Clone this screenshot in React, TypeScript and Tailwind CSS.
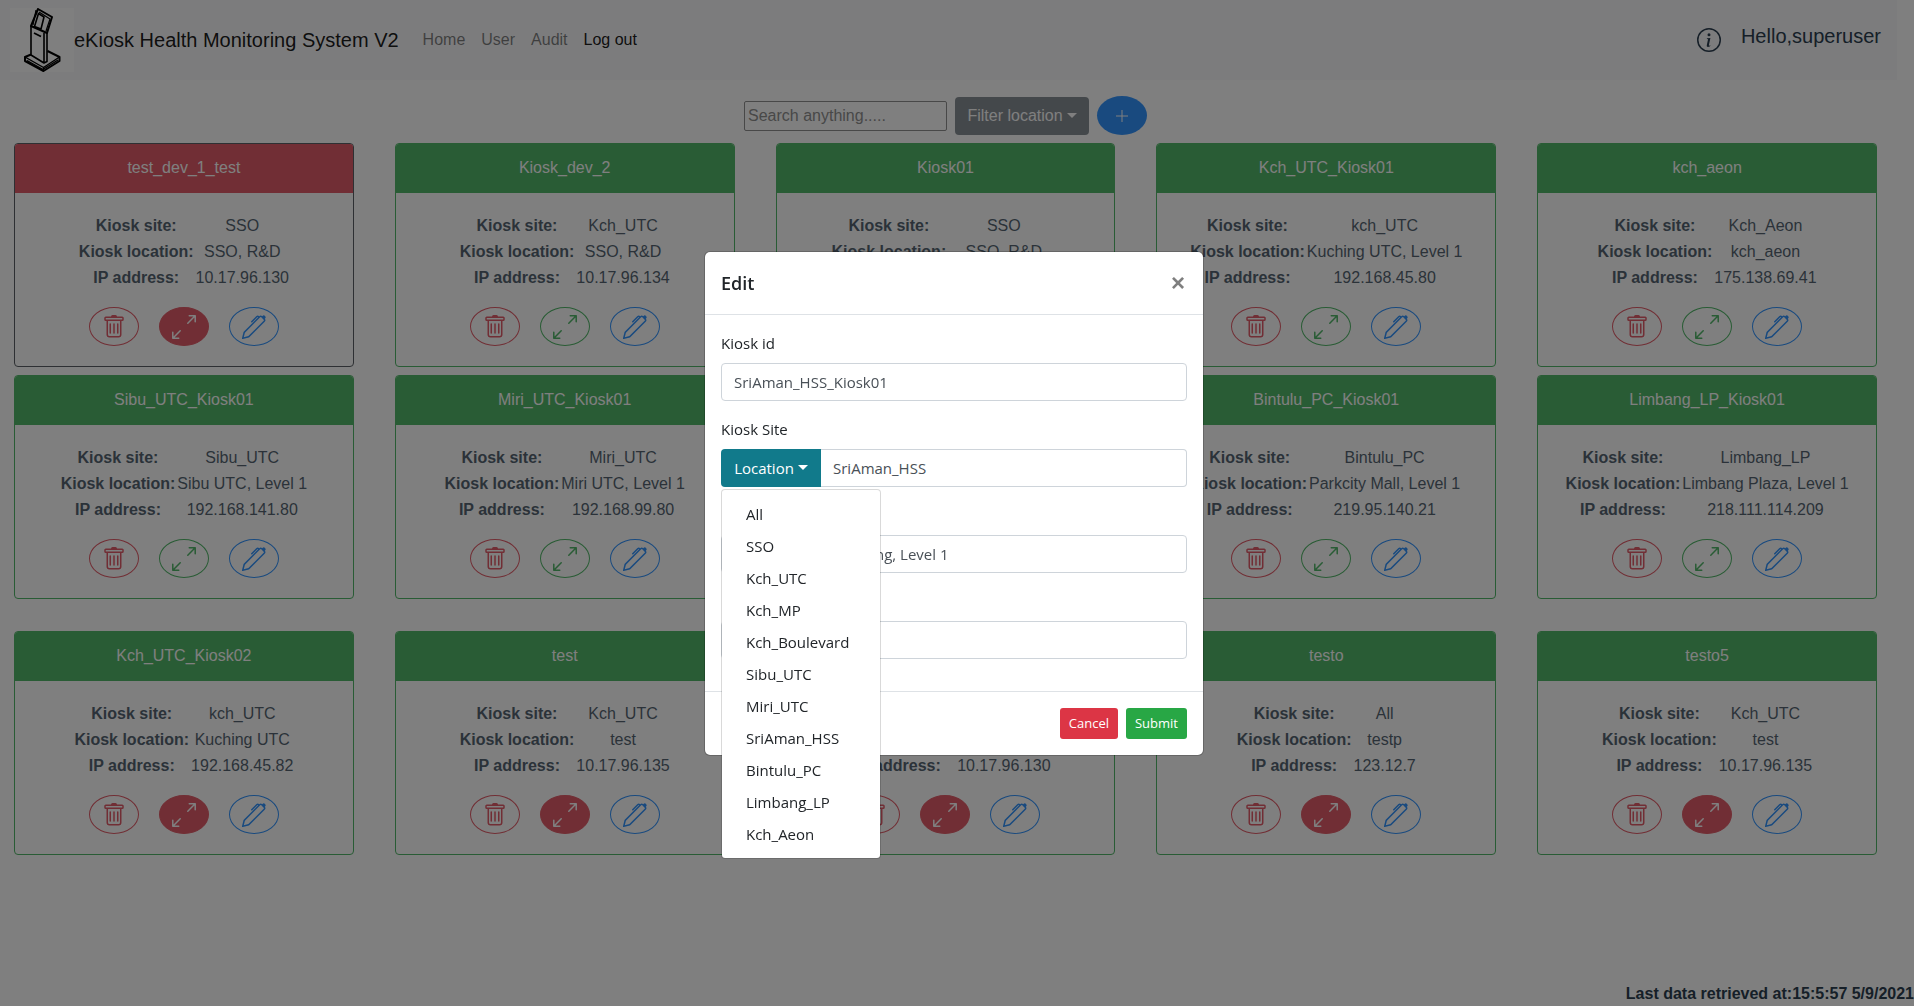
import { useState } from "react";
import { BsArrowsAngleExpand, BsInfoCircle, BsPen, BsTrash } from "react-icons/bs";

type Kiosk = {
  name: string;
  site: string;
  location: string;
  ip: string;
  alert?: boolean;
  closed?: boolean;
};

const mainKiosks: Kiosk[] = [
  { name: "test_dev_1_test", site: "SSO", location: "SSO, R&D", ip: "10.17.96.130", alert: true, closed: true },
  { name: "Kiosk_dev_2", site: "Kch_UTC", location: "SSO, R&D", ip: "10.17.96.134" },
  { name: "Kiosk01", site: "SSO", location: "SSO, R&D", ip: "192.168.101.80" },
  { name: "Kch_UTC_Kiosk01", site: "kch_UTC", location: "Kuching UTC, Level 1", ip: "192.168.45.80" },
  { name: "kch_aeon", site: "Kch_Aeon", location: "kch_aeon", ip: "175.138.69.41" },
  { name: "Sibu_UTC_Kiosk01", site: "Sibu_UTC", location: "Sibu UTC, Level 1", ip: "192.168.141.80" },
  { name: "Miri_UTC_Kiosk01", site: "Miri_UTC", location: "Miri UTC, Level 1", ip: "192.168.99.80" },
  { name: "SriAman_HSS_Kiosk01", site: "SriAman_HSS", location: "Level 1", ip: "" },
  { name: "Bintulu_PC_Kiosk01", site: "Bintulu_PC", location: "Parkcity Mall, Level 1", ip: "219.95.140.21" },
  { name: "Limbang_LP_Kiosk01", site: "Limbang_LP", location: "Limbang Plaza, Level 1", ip: "218.111.114.209" },
];

const otherKiosks: Kiosk[] = [
  { name: "Kch_UTC_Kiosk02", site: "kch_UTC", location: "Kuching UTC", ip: "192.168.45.82", closed: true },
  { name: "test", site: "Kch_UTC", location: "test", ip: "10.17.96.135", closed: true },
  { name: "test2", site: "SSO", location: "test", ip: "10.17.96.130", closed: true },
  { name: "testo", site: "All", location: "testp", ip: "123.12.7", closed: true },
  { name: "testo5", site: "Kch_UTC", location: "test", ip: "10.17.96.135", closed: true },
];

const locations = [
  "All",
  "SSO",
  "Kch_UTC",
  "Kch_MP",
  "Kch_Boulevard",
  "Sibu_UTC",
  "Miri_UTC",
  "SriAman_HSS",
  "Bintulu_PC",
  "Limbang_LP",
  "Kch_Aeon",
];

const round = "flex h-[39px] w-[50px] items-center justify-center rounded-[50%] border text-2xl";
const field =
  "h-[38px] w-full min-w-0 rounded border border-[#ced4da] bg-white px-3 text-[15px] text-[#495057] outline-none";

function Caret() {
  return (
    <span
      aria-hidden="true"
      className="inline-block border-x-[5px] border-t-[5px] border-x-transparent border-t-current"
    />
  );
}

function KioskLogo() {
  return (
    <svg viewBox="10 8 64 64" className="size-16 bg-white" fill="none" stroke="#000" strokeLinejoin="round" aria-hidden="true">
      <path strokeWidth="2" d="M38 9 52 17 47 33 31 26Z" />
      <path strokeWidth="1.2" d="M36 10 33 25M39 12 50 19M50 19 46 31" />
      <path strokeWidth="1.6" d="M38.500 13.500 44 17 41 29 34.500 26.500Z" />
      <path strokeWidth="1.6" d="M31 26V55L44 63V33M47 33V61.500L44 63" />
      <path strokeWidth="1.8" d="M34 33 41 36.500" />
      <path strokeWidth="2" d="M31 54.500 25 57V61L43.500 71 59.500 61V57L47.500 51" />
      <path strokeWidth="1.4" d="M25 57 43.500 67.500 59.500 57M43.500 67.500V71M27 60.500 43 69.500 58 60" />
    </svg>
  );
}

function KioskCard({ kiosk }: { kiosk: Kiosk }) {
  const rows = [
    ["Kiosk site:", kiosk.site],
    ["Kiosk location:", kiosk.location],
    ["IP address:", kiosk.ip],
  ];
  return (
    <article
      className={`overflow-hidden rounded border bg-white opacity-80 ${kiosk.alert ? "border-[#343a40]" : "border-[#28a745]"}`}
    >
      <h2
        className={`border-b py-3 text-center leading-6 text-white ${
          kiosk.alert ? "border-[#dc3545] bg-[#dc3545]" : "border-[#28a745] bg-[#28a745]"
        }`}
      >
        {kiosk.name}
      </h2>
      <div className="p-5">
        <table className="mx-auto text-center leading-6 whitespace-nowrap">
          <tbody>
            {rows.map(([label, value]) => (
              <tr key={label}>
                <th scope="row" className="p-px font-bold">
                  {label}
                </th>
                <td className="p-px">{value}</td>
              </tr>
            ))}
          </tbody>
        </table>
        <div className="mt-4 flex justify-center gap-5">
          <button type="button" aria-label="Delete" className={`${round} border-[#dc3545] text-[#dc3545]`}>
            <BsTrash />
          </button>
          <button
            type="button"
            aria-label="Expand"
            className={`${round} ${
              kiosk.closed ? "border-[#dc3545] bg-[#dc3545] text-white" : "border-[#28a745] text-[#28a745]"
            }`}
          >
            <BsArrowsAngleExpand />
          </button>
          <button type="button" aria-label="Edit" className={`${round} border-[#007bff] text-[#007bff]`}>
            <BsPen />
          </button>
        </div>
      </div>
    </article>
  );
}

function KioskGrid({ kiosks }: { kiosks: Kiosk[] }) {
  return (
    <div className="grid grid-cols-5 gap-x-[41px] gap-y-2">
      {kiosks.map((kiosk) => (
        <KioskCard key={kiosk.name} kiosk={kiosk} />
      ))}
    </div>
  );
}

function EditDialog() {
  const [menuOpen, setMenuOpen] = useState(true);
  const [site, setSite] = useState("SriAman_HSS");
  return (
    <div className="fixed inset-0 flex items-center justify-center bg-black/50 pr-[6px] font-['Open_Sans',sans-serif] text-[15px] leading-6 text-[#212529]">
      <div
        role="dialog"
        aria-modal="true"
        aria-labelledby="edit-title"
        className="w-[500px] rounded-md border border-black/20 bg-white bg-clip-padding"
      >
        <header className="flex items-start justify-between border-b border-[#dee2e6] p-4">
          <h1 id="edit-title" className="text-lg leading-[30px] font-semibold">
            Edit
          </h1>
          <button
            type="button"
            aria-label="Close"
            className="px-0.5 font-['Liberation_Sans',sans-serif] text-2xl leading-[30px] font-bold text-[#7f7f7f]"
          >
            ×
          </button>
        </header>
        <div className="flex flex-col gap-4 px-4 pt-4 pb-8">
          <div className="flex flex-col gap-2">
            <label htmlFor="kiosk-id">Kiosk id</label>
            <input id="kiosk-id" className={field} defaultValue="SriAman_HSS_Kiosk01" />
          </div>
          <div className="flex flex-col gap-2">
            <label htmlFor="kiosk-site">Kiosk Site</label>
            <div className="relative flex">
              <button
                type="button"
                aria-haspopup="menu"
                aria-expanded={menuOpen}
                onClick={() => setMenuOpen(!menuOpen)}
                className="flex h-[38px] w-[100px] shrink-0 items-center justify-center gap-1 rounded-l bg-[#117a8b] text-[15px] font-medium text-white"
              >
                Location <Caret />
              </button>
              <input
                id="kiosk-site"
                className={`${field} rounded-l-none border-l-0`}
                value={site}
                onChange={(event) => setSite(event.target.value)}
              />
              {menuOpen && (
                <ul
                  role="menu"
                  className="absolute top-full left-0 z-10 mt-0.5 w-40 rounded border border-black/15 bg-white bg-clip-padding py-2"
                >
                  {locations.map((name) => (
                    <li key={name} role="none">
                      <button
                        type="button"
                        role="menuitem"
                        onClick={() => {
                          setSite(name);
                          setMenuOpen(false);
                        }}
                        className="block w-full px-6 py-1 text-left"
                      >
                        {name}
                      </button>
                    </li>
                  ))}
                </ul>
              )}
            </div>
          </div>
          <div className="flex flex-col gap-2">
            <label htmlFor="kiosk-location">Kiosk Location</label>
            <input id="kiosk-location" className={field} defaultValue="Wisma Sri Simanggang, Level 1" />
          </div>
          <div className="flex flex-col gap-2">
            <label htmlFor="kiosk-ip">IP address</label>
            <input id="kiosk-ip" className={field} />
          </div>
        </div>
        <footer className="flex justify-end gap-2 border-t border-[#dee2e6] p-4 text-[13px]">
          <button type="button" className="h-[31px] rounded-[3px] bg-[#dc3545] px-[9px] font-medium text-white">
            Cancel
          </button>
          <button type="button" className="h-[31px] rounded-[3px] bg-[#28a745] px-[9px] font-medium text-white">
            Submit
          </button>
        </footer>
      </div>
    </div>
  );
}

export default function App() {
  return (
    <div className="flex min-h-screen flex-col bg-white font-['Liberation_Sans',Arial,sans-serif] text-base text-[#2c3e50]">
      <div className="pr-[17px]">
        <nav className="flex h-20 items-center bg-[#f8f9fa] pr-4 pl-[10px] text-black/50">
          <a href="#" className="flex items-center text-xl text-black/90">
            <KioskLogo />
            eKiosk Health Monitoring System V2
          </a>
          <div className="ml-6 flex gap-4">
            <a href="#">Home</a>
            <a href="#">User</a>
            <a href="#">Audit</a>
            <a href="#" className="text-black/90">
              Log out
            </a>
          </div>
          <div className="ml-auto flex items-center gap-5 text-xl text-[#2c3e50]">
            <button type="button" aria-label="Information" className="text-2xl">
              <BsInfoCircle />
            </button>
            <span className="pb-2">Hello,superuser</span>
          </div>
        </nav>
        <div className="flex items-center justify-center gap-2 py-2 pt-4 pr-[6px] opacity-80">
          <input
            type="search"
            aria-label="Search kiosks"
            placeholder="Search anything....."
            className="h-[30px] w-[203px] rounded-xs border border-[#767676] bg-white px-[3px] placeholder:text-[#757575]"
          />
          <button
            type="button"
            aria-haspopup="menu"
            className="flex h-[38px] w-[134px] items-center justify-center gap-1 rounded bg-[#6c757d] text-white"
          >
            Filter location <Caret />
          </button>
          <button
            type="button"
            aria-label="Add kiosk"
            className="flex h-[39px] w-[50px] items-center justify-center rounded-[50%] bg-[#007bff] text-white"
          >
            <svg viewBox="0 0 12 12" className="size-3" stroke="currentColor" aria-hidden="true">
              <path d="M6 0v12M0 6h12" />
            </svg>
          </button>
        </div>
        <main className="flex flex-col gap-8 pr-5 pl-[14px]">
          <KioskGrid kiosks={mainKiosks} />
          <KioskGrid kiosks={otherKiosks} />
        </main>
      </div>
      <footer className="mt-auto text-right leading-6 font-bold">Last data retrieved at:15:5:57 5/9/2021</footer>
      <EditDialog />
    </div>
  );
}
